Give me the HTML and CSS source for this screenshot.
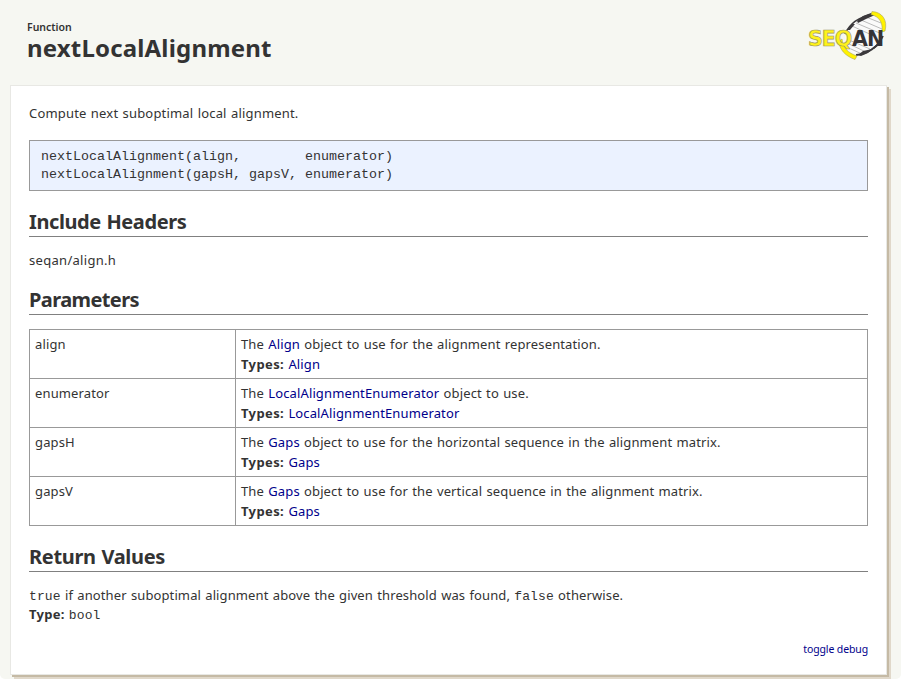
FILE: index.html
```html
<!DOCTYPE html>
<html lang="en">
<head>
<meta charset="utf-8">
<title>nextLocalAlignment</title>
<link rel="stylesheet" href="styles.css">
</head>
<body>
<div class="page">
<header class="header">
<div class="titles"><div class="kind">Function</div><h1>nextLocalAlignment</h1></div>
<svg class="logo" width="80" height="52" viewBox="0 0 80 52">
<path d="M37 28C42 15 53 6 65 5C77 8 77 23 73 33C67 40 59 44 49 46C43 43 38 37 37 28Z" fill="#fafafa"/>
<g stroke="#aaa" stroke-width=".8"><path d="M58 8L73 14M53 11L74 20M48 14L74 25M44 17L66 27M41 31L62 40M41 35L58 43M43 40L54 45"/></g>
<path d="M37 25C41 16 50 8 65 5" fill="none" stroke="#3b393c" stroke-width="1.6"/>
<path d="M49 12L55 7L63 4L67 6L58 10L50 14ZM39 21L44 15L47 15L42 21Z" fill="#3b393c"/>
<path d="M48 46C60 45 70 38 75 27" fill="none" stroke="#3b393c" stroke-width="1.8"/>
<path d="M50 46L55 42L64 40L60 44L53 47ZM63 40L69 35L71 36L66 40Z" fill="#3b393c"/>
<path d="M64 2.500C74 3 80 11 77 22L74 23C75 14 72 8 63 5.500ZM34 30C35 39 40 44 49 47L47 50.500C37 47 31 40 31 32Z" fill="#fff200" stroke="#aaa45f" stroke-width=".6"/>
<text class="seq" x="0" y="37">SEQ</text><text class="an" x="44" y="37">AN</text>
</svg>
</header>
<main class="card">
<p class="intro">Compute next suboptimal local alignment.</p>
<pre>nextLocalAlignment(align,        enumerator)
nextLocalAlignment(gapsH, gapsV, enumerator)</pre>
<h2 class="h-include">Include Headers</h2>
<p class="include">seqan/align.h</p>
<h2 class="h-params">Parameters</h2>
<table>
<tr><td>align</td><td>The <a>Align</a> object to use for the alignment representation.<br><b>Types:</b> <a>Align</a></td></tr>
<tr><td>enumerator</td><td>The <a>LocalAlignmentEnumerator</a> object to use.<br><b>Types:</b> <a>LocalAlignmentEnumerator</a></td></tr>
<tr><td>gapsH</td><td>The <a>Gaps</a> object to use for the horizontal sequence in the alignment matrix.<br><b>Types:</b> <a>Gaps</a></td></tr>
<tr><td>gapsV</td><td>The <a>Gaps</a> object to use for the vertical sequence in the alignment matrix.<br><b>Types:</b> <a>Gaps</a></td></tr>
</table>
<h2 class="h-return">Return Values</h2>
<p class="returns"><code>true</code> if another suboptimal alignment above the given threshold was found, <code>false</code> otherwise.</p>
<p class="type"><b>Type:</b> <code>bool</code></p>
<div class="debug"><a>toggle debug</a></div>
</main>
</div>
</body>
</html>
```
FILE: styles.css
```css
* { box-sizing: border-box; }
html { background: #fff; }
body { margin: 0; height: 679px; overflow: hidden; color: #333; font: 13px/20px "Noto Sans", sans-serif; letter-spacing: .13px; word-spacing: .75px; }
.page { height: 679px; background: #f6f7f2; border-radius: 0 0 5px 5px; }
.header { height: 85px; display: flex; justify-content: space-between; padding: 9px 13px 0 27px; }
.titles { padding-top: 10px; }
.kind { font-size: 10.5px; line-height: 16px; font-weight: 600; letter-spacing: 0; }
h1 { margin: 0; font-size: 24px; line-height: 26px; font-weight: 700; letter-spacing: .17px; }
.logo { display: block; word-spacing: 0; }
.seq, .an { font: bold 20.5px "DejaVu Sans", sans-serif; }
.seq { fill: #fff21a; stroke: #9c985e; stroke-width: .7px; letter-spacing: -1px; }
.an { fill: #353337; letter-spacing: -.8px; }
.card { width: 877px; height: 590px; margin-left: 10px; padding: 17px 18px 0; background: #fff; border: 1px solid #e8e8e4; box-shadow: 2px 2px 0 #c5baa5, 4px 4px 0 #e0d8ca; }
p, pre, h2 { margin: 0; }
.intro { letter-spacing: .18px; }
pre { height: 51px; margin-top: 17px; padding: 7px 11px; border: 1px solid #999; background: #ebf2ff; font: 13.33px/18px "Liberation Mono", monospace; letter-spacing: 0; word-spacing: 0; }
h2 { height: 28px; font-size: 20px; line-height: 26px; border-bottom: 1px solid #808080; }
.h-include { margin-top: 18px; letter-spacing: -.4px; }
.include { margin-top: 13px; letter-spacing: .3px; }
.h-params { margin-top: 17px; letter-spacing: -.6px; }
table { width: 839px; margin-top: 14px; border-collapse: collapse; table-layout: fixed; }
td { height: 49px; padding: 4px 5px; border: 1px solid #999; vertical-align: top; }
td:first-child { width: 206px; }
td b { letter-spacing: .38px; }
a { color: #00008b; }
.h-return { margin-top: 18px; letter-spacing: -.32px; }
.returns { height: 19px; margin-top: 13px; letter-spacing: .115px; }
.type { height: 21px; }
.type b { letter-spacing: .25px; }
code { font: 13px "Liberation Mono", monospace; }
.debug { margin-top: 14px; text-align: right; font-size: 10.5px; letter-spacing: -.12px; word-spacing: 0; }
```
